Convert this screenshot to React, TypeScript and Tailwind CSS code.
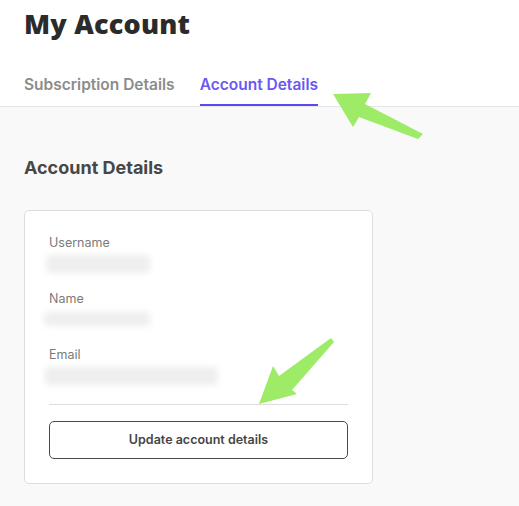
import React from "react";

function Redacted({ className }: { className: string }) {
  return (
    <div className={`rounded-sm bg-[#eeeeee] blur-[3px] ${className}`} />
  );
}

function Field({
  label,
  blurClass,
}: {
  label: string;
  blurClass: string;
}) {
  return (
    <div className="flex flex-col">
      <p className="text-[12.5px] leading-[16px] text-[#7a7a7a]">{label}</p>
      <div className="h-[22px] pt-[4px]">
        <Redacted className={blurClass} />
      </div>
    </div>
  );
}

export default function App() {
  return (
    <div className="relative min-h-[506px] w-full bg-[#f9f9f9] font-['Inter','Liberation_Sans',sans-serif]">
      <div className="border-b border-[#e6e6e6] bg-white px-6">
        <h1 className="pt-[8px] font-['Open_Sans','Liberation_Sans',sans-serif] text-[27px] leading-[32px] font-extrabold tracking-[0.2px] text-[#2b2b2b]">
          My Account
        </h1>

        <div className="mt-[35px] flex gap-[25px] text-[15.5px] leading-[20px] font-semibold">
          <button className="border-b-2 border-transparent pb-[9px] text-[#8c8c8c]">
            Subscription Details
          </button>
          <button className="border-b-2 border-[#5a48f0] pb-[9px] text-[#6a58f2]">
            Account Details
          </button>
        </div>
      </div>

      <div className="px-6 pt-[50px] pb-6">
        <h2 className="text-[18px] leading-[22px] font-bold text-[#474747]">
          Account Details
        </h2>

        <div className="mt-[31px] w-[349px] rounded-[5px] border border-[#dedede] bg-white px-6 pt-[24px] pb-6">
          <div className="flex flex-col gap-[18px]">
            <Field label="Username" blurClass="ml-[-3px] h-[18px] w-[104px]" />
            <Field label="Name" blurClass="mt-[1px] ml-[-5px] h-[14px] w-[106px]" />
            <Field label="Email" blurClass="ml-[-4px] h-[18px] w-[173px]" />
          </div>

          <div className="mt-[19px] border-t border-[#dddddd]" />

          <button className="mt-[16px] h-[38px] w-full rounded-[5px] border border-[#4a4a4a] text-[12.5px] font-semibold text-[#454545]">
            Update account details
          </button>
        </div>
      </div>

      <svg
        className="pointer-events-none absolute top-0 left-0"
        width="519"
        height="506"
        viewBox="0 0 519 506"
      >
        <polygon
          points="333,94 371,93 365,104 423,134 418,139 359,117 353,127"
          fill="#9deb66"
        />
        <polygon
          points="259,404 273,366 279,376 331,338 334,342 292,390 297,394"
          fill="#9deb66"
        />
      </svg>
    </div>
  );
}
